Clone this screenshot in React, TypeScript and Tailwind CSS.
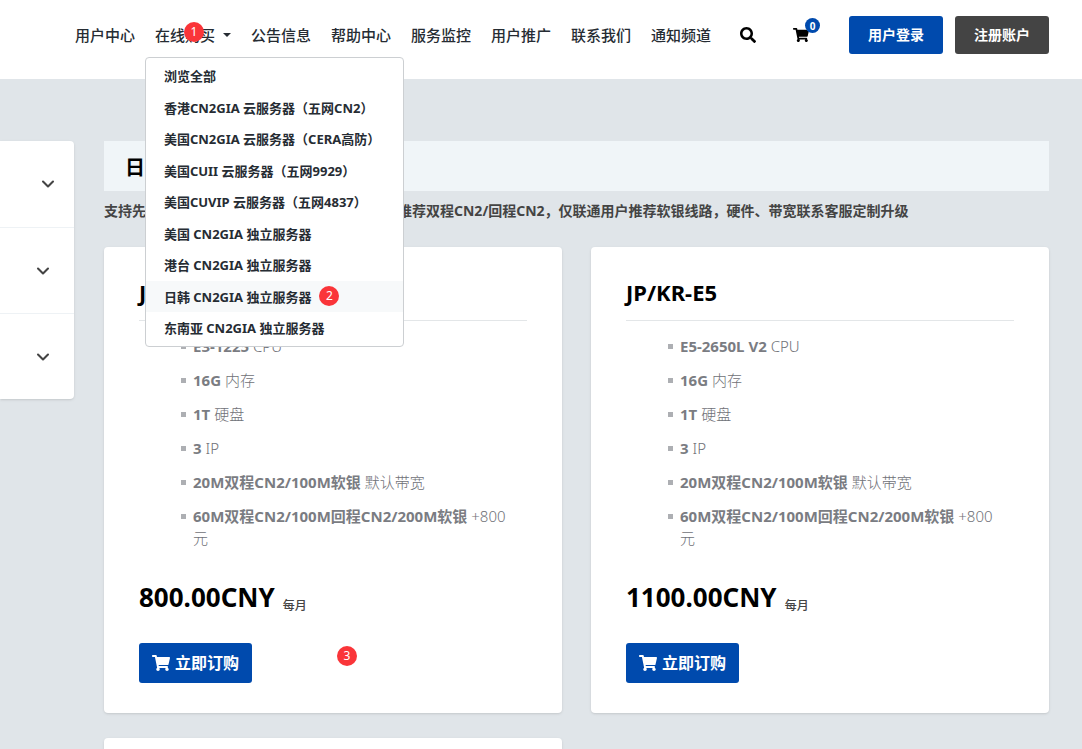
import { ChevronDown } from "lucide-react";
import { FaSearch, FaShoppingCart } from "react-icons/fa";

const navLinks = ["公告信息", "帮助中心", "服务监控", "用户推广", "联系我们", "通知频道"];

const storeLinks = [
  "浏览全部",
  "香港CN2GIA 云服务器（五网CN2）",
  "美国CN2GIA 云服务器（CERA高防）",
  "美国CUII 云服务器（五网9929）",
  "美国CUVIP 云服务器（五网4837）",
  "美国 CN2GIA 独立服务器",
  "港台 CN2GIA 独立服务器",
  "日韩 CN2GIA 独立服务器",
  "东南亚 CN2GIA 独立服务器",
];

const activeStore = "日韩 CN2GIA 独立服务器";

const commonSpecs = [
  ["16G", "内存"],
  ["1T", "硬盘"],
  ["3", "IP"],
  ["20M双程CN2/100M软银", "默认带宽"],
  ["60M双程CN2/100M回程CN2/200M软银", "+800元"],
];

const products = [
  { name: "JP/KR-E3", cpu: "E3-1225", price: "800.00CNY", step: "3" },
  { name: "JP/KR-E5", cpu: "E5-2650L V2", price: "1100.00CNY" },
];

function Step({ n }: { n: string }) {
  return (
    <span className="flex size-5 items-center justify-center rounded-full bg-[#fa3539] text-xs leading-5 font-normal text-white">
      {n}
    </span>
  );
}

function Header() {
  return (
    <header className="flex justify-end bg-white pt-4 pr-[33px] pb-[25px]">
      <nav className="flex items-stretch text-[15px] leading-5 font-medium whitespace-nowrap text-[#262c33]">
        <a href="#" className="flex items-center px-[10px]">用户中心</a>
        <div className="relative flex">
          <a href="#" className="flex items-center gap-2 px-[10px]">
            在线购买
            <span className="border-x-4 border-t-4 border-x-transparent border-t-[#262c33]" />
          </a>
          <div className="absolute top-[6px] left-[39px]">
            <Step n="1" />
          </div>
          <StoreMenu />
        </div>
        {navLinks.map((label) => (
          <a key={label} href="#" className="flex items-center px-[10px]">{label}</a>
        ))}
      </nav>
      <button type="button" aria-label="搜索" className="ml-[19px] text-base text-black">
        <FaSearch />
      </button>
      <a href="#" aria-label="购物车" className="relative ml-[37px] flex items-center text-base text-black">
        <FaShoppingCart />
        <span className="absolute top-[2px] left-3 flex size-[15px] items-center justify-center rounded-full bg-[#004aad] text-[10px] leading-none font-bold text-white">
          0
        </span>
      </a>
      <a href="#" className="ml-10 flex h-[38px] items-center rounded-[3px] bg-[#004aad] px-[19px] text-sm font-bold whitespace-nowrap text-white">
        用户登录
      </a>
      <a href="#" className="ml-3 flex h-[38px] items-center rounded-[3px] bg-[#444444] px-[19px] text-sm font-bold whitespace-nowrap text-white">
        注册账户
      </a>
    </header>
  );
}

function StoreMenu() {
  return (
    <ul className="absolute top-[41px] left-0 z-10 w-[259px] rounded border border-[#cccfd2] bg-white py-[2px] text-[13px] leading-normal font-bold">
      {storeLinks.map((label) => (
        <li key={label} className={label === activeStore ? "bg-[#f7f9fa]" : ""}>
          <a href="#" className="flex items-center px-[18px] pt-[7px] pb-[5px]">
            <span className="relative">
              {label}
              {label === activeStore && (
                <span className="absolute -top-[2px] left-full ml-2">
                  <Step n="2" />
                </span>
              )}
            </span>
          </a>
        </li>
      ))}
    </ul>
  );
}

function Sidebar() {
  return (
    <aside className="w-[74px] shrink-0 self-start rounded-r bg-white shadow-sm">
      <button type="button" aria-label="产品分类" className="flex h-[86px] w-full items-center justify-end pr-4 text-[#444]">
        <ChevronDown size={20} strokeWidth={2.5} />
      </button>
      <button type="button" aria-label="操作" className="flex h-[86px] w-full items-center justify-end border-t border-[#eef2f5] pr-[21px] text-[#444]">
        <ChevronDown size={20} strokeWidth={2.5} />
      </button>
      <button type="button" aria-label="选择货币" className="flex h-[86px] w-full items-center justify-end border-t border-[#eef2f5] pr-[21px] text-[#444]">
        <ChevronDown size={20} strokeWidth={2.5} />
      </button>
    </aside>
  );
}

function ProductCard({ name, cpu, price, step }: { name: string; cpu: string; price: string; step?: string }) {
  return (
    <article className="relative rounded bg-white px-[35px] pt-[30px] pb-[30px] shadow-sm">
      <h2 className="border-b border-[#e3e6e8] pb-[13px] text-[22px] leading-[30px] font-bold text-black">{name}</h2>
      <ul className="mt-[14px] pr-5 pl-[42px] text-[15px] leading-[22px] font-light text-[#6f7177]">
        {[[cpu, "CPU"], ...commonSpecs].map(([value, label]) => (
          <li key={label} className="mb-3 flex gap-[7px]">
            <span className="mt-[9px] size-[5px] shrink-0 bg-[#adafb3]" />
            <span>
              <b className="font-bold text-[#7a7c82]">{value}</b> {label}
            </span>
          </li>
        ))}
      </ul>
      <p className="mt-[28px] flex items-end gap-2 text-black">
        <span className="text-[26px] leading-10 font-bold">{price}</span>
        <span className="pb-[3px] text-xs leading-4 font-medium text-[#444]">每月</span>
      </p>
      <button type="button" className="mt-[26px] flex h-10 items-center gap-[5px] rounded-[3px] bg-[#004aad] px-[13px] text-base font-bold text-white">
        <FaShoppingCart size={18} />
        立即订购
      </button>
      {step && (
        <div className="absolute bottom-[47px] left-[233px]">
          <Step n={step} />
        </div>
      )}
    </article>
  );
}

export default function App() {
  return (
    <div className="h-screen overflow-hidden bg-[#e0e5e9] font-['Noto_Sans','Noto_Sans_CJK_SC',sans-serif]">
      <Header />
      <div className="flex gap-[30px] pt-[62px] pr-[33px]">
        <Sidebar />
        <main className="min-w-0 flex-1">
          <h1 className="bg-[#f0f5f8] px-[21px] pt-[4px] text-xl leading-[46px] font-bold text-black">日韩 CN2GIA 独立服务器</h1>
          <p className="mt-[10px] text-sm leading-5 font-bold text-[#444]">
            支持先测试后付款，电信移动联通三网用户优先推荐双程CN2/回程CN2，仅联通用户推荐软银线路，硬件、带宽联系客服定制升级
          </p>
          <div className="mt-[26px] grid grid-cols-2 gap-x-[29px] gap-y-[25px]">
            {products.map((product) => (
              <ProductCard key={product.name} {...product} />
            ))}
            <article className="h-32 rounded bg-white shadow-sm" />
          </div>
        </main>
      </div>
    </div>
  );
}
